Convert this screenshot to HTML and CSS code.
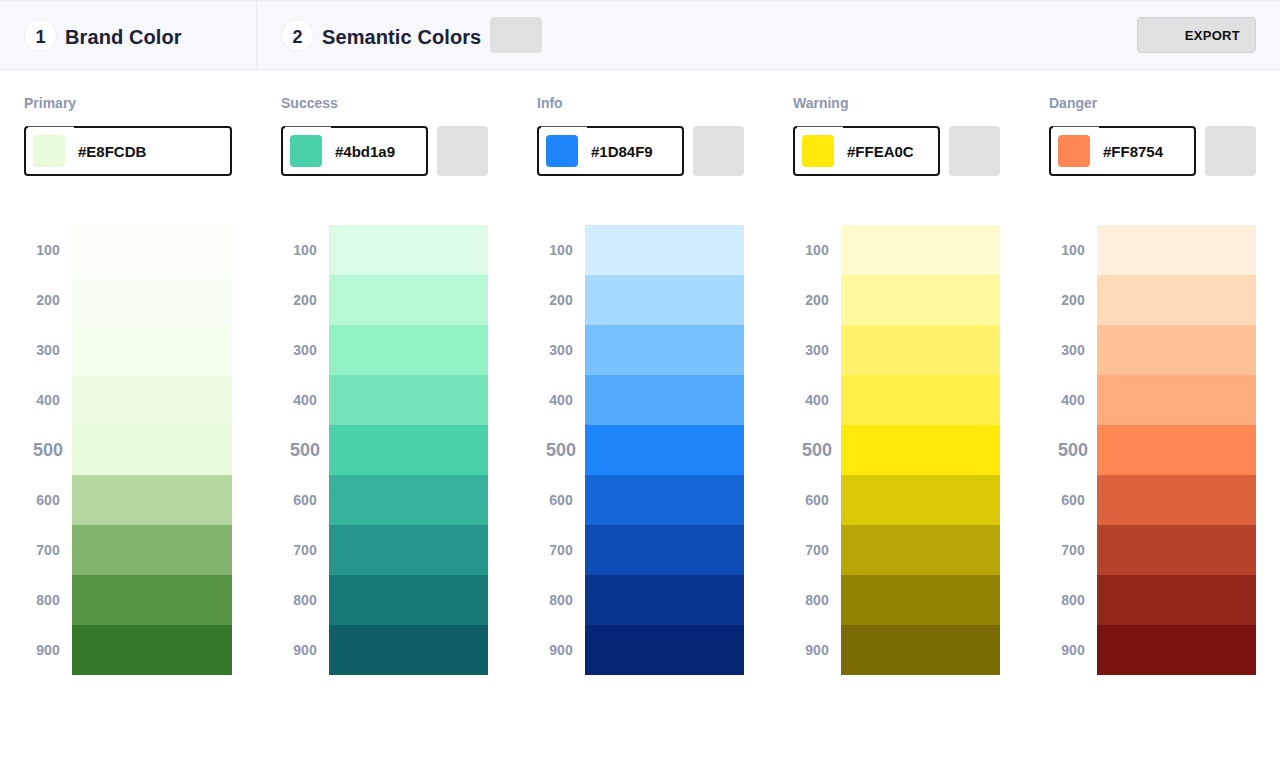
FILE: index.html
```html
<!DOCTYPE html>
<html lang="en">
<head>
  <meta charset="UTF-8">
  <meta name="viewport" content="width=device-width, initial-scale=1">
  <title>Palette Builder</title>
  <link rel="stylesheet" href="styles.css">
</head>
<body>

  <header class="topbar">
    <div class="step step-brand">
      <span class="step-num">1</span>
      <h2>Brand Color</h2>
    </div>
    <div class="step step-semantic">
      <span class="step-num">2</span>
      <h2>Semantic Colors</h2>
      <span class="ghost-btn"></span>
    </div>
    <button class="export">EXPORT</button>
  </header>

  <main class="palettes">

    <section class="palette">
      <div class="palette-name">Primary</div>
      <div class="picker">
        <div class="hex-field full">
          <span class="chip" style="background:#E8FCDB"></span>
          <span class="hex">#E8FCDB</span>
        </div>
      </div>
      <div class="scale">
        <span class="step-label">100</span><div class="swatch" style="background:#fbfef8"></div>
        <span class="step-label">200</span><div class="swatch" style="background:#f7fdf2"></div>
        <span class="step-label">300</span><div class="swatch" style="background:#f2fdeb"></div>
        <span class="step-label">400</span><div class="swatch" style="background:#edfbe3"></div>
        <span class="step-label big">500</span><div class="swatch" style="background:#e8fcdb"></div>
        <span class="step-label">600</span><div class="swatch" style="background:#b4d89f"></div>
        <span class="step-label">700</span><div class="swatch" style="background:#82b46d"></div>
        <span class="step-label">800</span><div class="swatch" style="background:#579445"></div>
        <span class="step-label">900</span><div class="swatch" style="background:#36782a"></div>
      </div>
    </section>

    <section class="palette">
      <div class="palette-name">Success</div>
      <div class="picker">
        <div class="hex-field">
          <span class="chip" style="background:#4bd1a9"></span>
          <span class="hex">#4bd1a9</span>
        </div>
        <span class="ghost-box"></span>
      </div>
      <div class="scale">
        <span class="step-label">100</span><div class="swatch" style="background:#dbfbe6"></div>
        <span class="step-label">200</span><div class="swatch" style="background:#b8f8d5"></div>
        <span class="step-label">300</span><div class="swatch" style="background:#93f2c4"></div>
        <span class="step-label">400</span><div class="swatch" style="background:#75e4b9"></div>
        <span class="step-label big">500</span><div class="swatch" style="background:#4bd1a9"></div>
        <span class="step-label">600</span><div class="swatch" style="background:#37b39b"></div>
        <span class="step-label">700</span><div class="swatch" style="background:#25968b"></div>
        <span class="step-label">800</span><div class="swatch" style="background:#177a79"></div>
        <span class="step-label">900</span><div class="swatch" style="background:#0e5e66"></div>
      </div>
    </section>

    <section class="palette">
      <div class="palette-name">Info</div>
      <div class="picker">
        <div class="hex-field">
          <span class="chip" style="background:#1D84F9"></span>
          <span class="hex">#1D84F9</span>
        </div>
        <span class="ghost-box"></span>
      </div>
      <div class="scale">
        <span class="step-label">100</span><div class="swatch" style="background:#d2edfe"></div>
        <span class="step-label">200</span><div class="swatch" style="background:#a5d9fe"></div>
        <span class="step-label">300</span><div class="swatch" style="background:#77c2fd"></div>
        <span class="step-label">400</span><div class="swatch" style="background:#55abfb"></div>
        <span class="step-label big">500</span><div class="swatch" style="background:#1d84f9"></div>
        <span class="step-label">600</span><div class="swatch" style="background:#1566d6"></div>
        <span class="step-label">700</span><div class="swatch" style="background:#0e4cb3"></div>
        <span class="step-label">800</span><div class="swatch" style="background:#093590"></div>
        <span class="step-label">900</span><div class="swatch" style="background:#052577"></div>
      </div>
    </section>

    <section class="palette">
      <div class="palette-name">Warning</div>
      <div class="picker">
        <div class="hex-field">
          <span class="chip" style="background:#FFEA0C"></span>
          <span class="hex">#FFEA0C</span>
        </div>
        <span class="ghost-box"></span>
      </div>
      <div class="scale">
        <span class="step-label">100</span><div class="swatch" style="background:#fffbce"></div>
        <span class="step-label">200</span><div class="swatch" style="background:#fff89d"></div>
        <span class="step-label">300</span><div class="swatch" style="background:#fff36c"></div>
        <span class="step-label">400</span><div class="swatch" style="background:#ffef47"></div>
        <span class="step-label big">500</span><div class="swatch" style="background:#ffea0c"></div>
        <span class="step-label">600</span><div class="swatch" style="background:#dbc808"></div>
        <span class="step-label">700</span><div class="swatch" style="background:#b7a606"></div>
        <span class="step-label">800</span><div class="swatch" style="background:#938403"></div>
        <span class="step-label">900</span><div class="swatch" style="background:#7a6b02"></div>
      </div>
    </section>

    <section class="palette">
      <div class="palette-name">Danger</div>
      <div class="picker">
        <div class="hex-field">
          <span class="chip" style="background:#FF8754"></span>
          <span class="hex">#FF8754</span>
        </div>
        <span class="ghost-box"></span>
      </div>
      <div class="scale">
        <span class="step-label">100</span><div class="swatch" style="background:#ffefdc"></div>
        <span class="step-label">200</span><div class="swatch" style="background:#ffdab9"></div>
        <span class="step-label">300</span><div class="swatch" style="background:#ffc297"></div>
        <span class="step-label">400</span><div class="swatch" style="background:#ffab7e"></div>
        <span class="step-label big">500</span><div class="swatch" style="background:#ff8754"></div>
        <span class="step-label">600</span><div class="swatch" style="background:#db623d"></div>
        <span class="step-label">700</span><div class="swatch" style="background:#b7422a"></div>
        <span class="step-label">800</span><div class="swatch" style="background:#93261b"></div>
        <span class="step-label">900</span><div class="swatch" style="background:#7a1210"></div>
      </div>
    </section>

  </main>

</body>
</html>
```

FILE: styles.css
```css
body {
  margin: 0;
  font-family: 'Liberation Sans', Arial, sans-serif;
  background: #fff;
  color: #1a1f36;
}

/* top bar with the two steps */
.topbar {
  display: flex;
  align-items: center;
  height: 68px;
  background: #f7f8fc;
  border-top: 1px solid #eceef3;
  border-bottom: 1px solid #e3e6ec;
}
.step {
  display: flex;
  align-items: center;
  height: 100%;
  padding-left: 24px;
  box-sizing: border-box;
}
.step-brand {
  width: 257px;
  border-right: 1px solid #e8eaf0;
}
.step-num {
  display: flex;
  align-items: center;
  justify-content: center;
  width: 33px;
  height: 33px;
  box-sizing: border-box;
  padding-top: 5px;
  border-radius: 50%;
  background: #fff;
  border: 1px solid #eceef2;
  font-size: 18px;
  font-weight: bold;
  color: #1c2238;
  margin-right: 8px;
}
.step h2 {
  margin: 5px 0 0;
  font-size: 20px;
  font-weight: bold;
  color: #1c2238;
  letter-spacing: 0.1px;
}
.ghost-btn {
  width: 52px;
  height: 36px;
  margin-left: 9px;
  border-radius: 4px;
  background: #e0e0e0;
}
.export {
  margin-left: auto;
  margin-right: 24px;
  width: 119px;
  height: 36px;
  padding: 0 15px 0 0;
  text-align: right;
  background: #e0e0e0;
  border: 1px solid #cfd3d8;
  border-radius: 4px;
  font-family: 'Liberation Sans', Arial, sans-serif;
  font-size: 13px;
  font-weight: bold;
  color: #111;
  letter-spacing: 0.3px;
}

/* palette columns */
.palettes {
  display: grid;
  grid-template-columns: 208px repeat(4, 207px);
  column-gap: 49px;
  padding: 26px 24px;
}
.palette-name {
  font-size: 14px;
  font-weight: bold;
  color: #8e97ac;
  height: 15px;
  line-height: 15px;
}
.picker {
  display: flex;
  gap: 9px;
  margin-top: 15px;
  height: 50px;
}
.hex-field {
  position: relative;
  display: flex;
  align-items: center;
  width: 148px;
  height: 50px;
  box-sizing: border-box;
  border: 2px solid #141414;
  border-radius: 4px;
  padding-left: 7px;
}
.hex-field.full {
  width: 208px;
}
/* notched outline leftover */
.hex-field::before {
  content: "";
  position: absolute;
  top: -2px;
  left: 2px;
  width: 46px;
  height: 2px;
  background: #fff;
  border-top: 1px solid #555;
  box-sizing: border-box;
}
.chip {
  width: 32px;
  height: 32px;
  border-radius: 4px;
  margin-right: 13px;
}
.hex {
  font-size: 15px;
  font-weight: bold;
  color: #111;
}
.ghost-box {
  width: 51px;
  height: 50px;
  border-radius: 4px;
  background: #e0e0e0;
}

/* scale */
.scale {
  display: grid;
  grid-template-columns: 48px 1fr;
  grid-auto-rows: 50px;
  margin-top: 49px;
}
.step-label {
  display: flex;
  align-items: center;
  justify-content: center;
  font-size: 14px;
  font-weight: bold;
  color: #8e97ac;
}
.step-label.big {
  font-size: 18px;
}
```
